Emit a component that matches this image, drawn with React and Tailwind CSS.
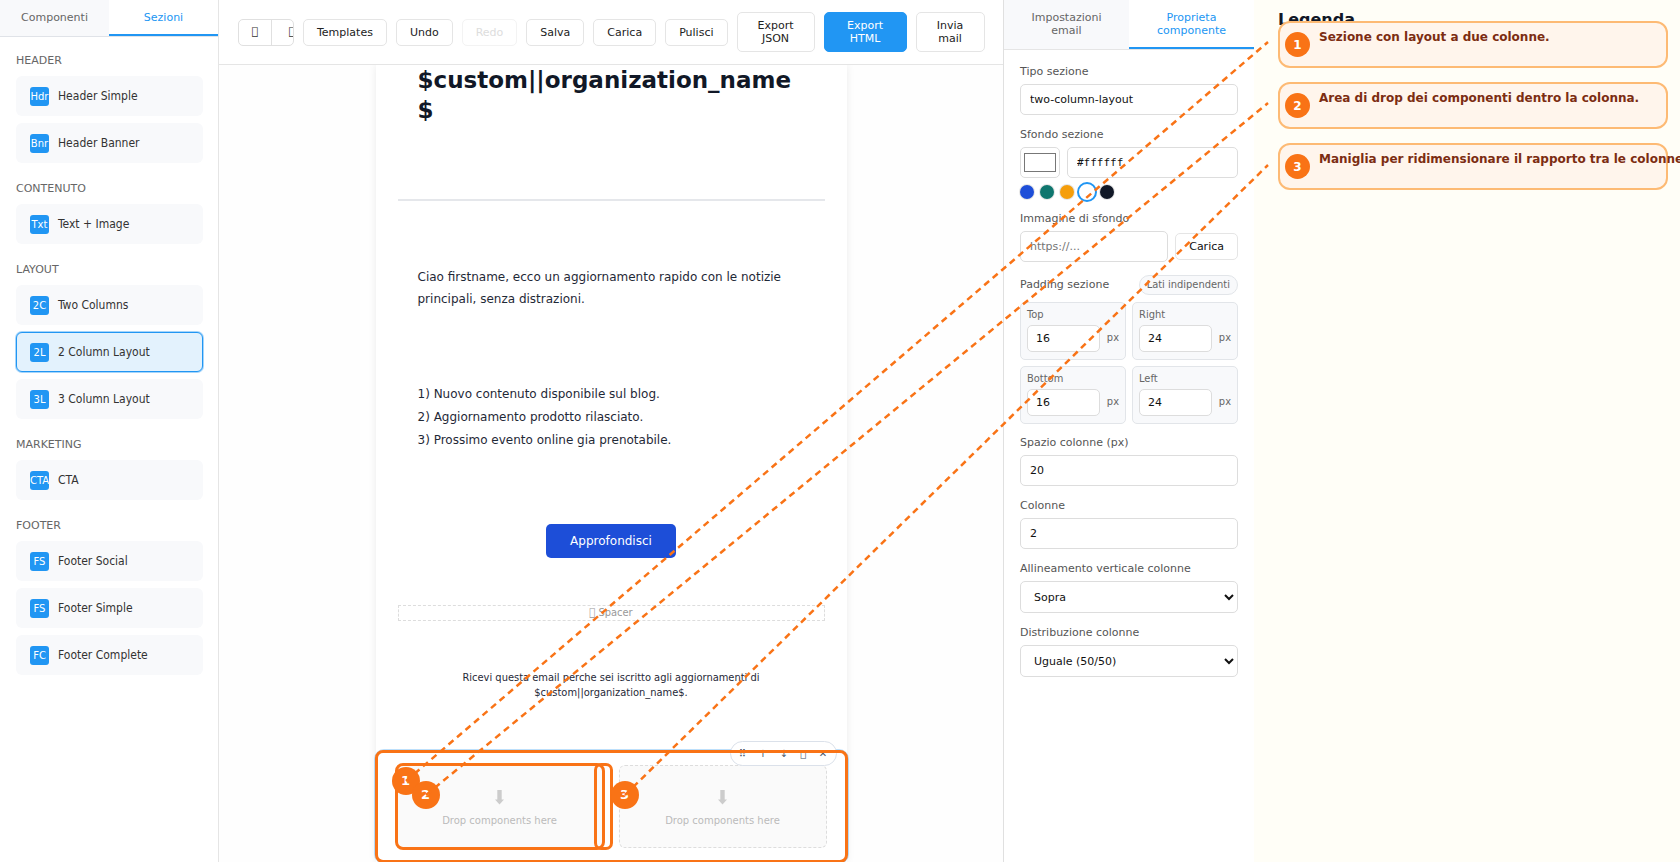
import React from "react";
import clsx from "clsx";

const sectionGroups = [
  {
    title: "HEADER",
    items: [
      { badge: "Hdr", name: "Header Simple" },
      { badge: "Bnr", name: "Header Banner" },
    ],
  },
  { title: "CONTENUTO", items: [{ badge: "Txt", name: "Text + Image" }] },
  {
    title: "LAYOUT",
    items: [
      { badge: "2C", name: "Two Columns" },
      { badge: "2L", name: "2 Column Layout", selected: true },
      { badge: "3L", name: "3 Column Layout" },
    ],
  },
  { title: "MARKETING", items: [{ badge: "CTA", name: "CTA" }] },
  {
    title: "FOOTER",
    items: [
      { badge: "FS", name: "Footer Social" },
      { badge: "FS", name: "Footer Simple" },
      { badge: "FC", name: "Footer Complete" },
    ],
  },
];

const swatches = [
  { name: "Blu", color: "bg-[#1d4ed8]" },
  { name: "Verde", color: "bg-[#0f766e]" },
  { name: "Arancio", color: "bg-[#f59e0b]" },
  { name: "Bianco", color: "bg-white", selected: true },
  { name: "Nero", color: "bg-[#111827]" },
];

const legend = [
  "Sezione con layout a due colonne.",
  "Area di drop dei componenti dentro la colonna.",
  "Maniglia per ridimensionare il rapporto tra le colonne.",
];

const connectors = [
  { x1: 406, y1: 781, x2: 1268, y2: 42 },
  { x1: 426, y1: 795, x2: 1268, y2: 103 },
  { x1: 625, y1: 795, x2: 1268, y2: 165 },
];

// glyph without a face in the UI font, shows as an empty box
const BOX = "\uE0FF";

function Tab({ active, children }) {
  return (
    <button
      className={clsx(
        "flex-1 px-5 text-[11px] leading-[13px] border-b-2",
        active ? "bg-white text-[#2196f3] border-[#2196f3]" : "bg-[#f8f9fb] text-[#666] border-transparent"
      )}
    >
      {children}
    </button>
  );
}

function SectionsSidebar() {
  return (
    <aside className="w-[219px] shrink-0 bg-white border-r border-[#e5e5e5]">
      <div className="flex h-[37px] border-b border-[#e0e3e8]">
        <Tab>Componenti</Tab>
        <Tab active>Sezioni</Tab>
      </div>
      <div className="pl-4 pr-[15px] pt-[17px] flex flex-col gap-[19px]">
        {sectionGroups.map((group) => (
          <div key={group.title}>
            <h3 className="text-[11px] leading-[14px] text-[#666] mb-2">{group.title}</h3>
            <div className="flex flex-col gap-[7px]">
              {group.items.map((item) => (
                <button
                  key={item.name}
                  className={clsx(
                    "h-10 w-full px-[13px] flex items-center gap-[9px] rounded-md border text-left",
                    item.selected ? "bg-[#e3f2fd] border-[#2196f3] ring-1 ring-[#2196f3]/40" : "bg-[#f8f9fb] border-transparent"
                  )}
                >
                  <span className="size-[19px] shrink-0 rounded-[3px] bg-[#2196f3] text-white text-[10px] flex items-center justify-center">
                    {item.badge}
                  </span>
                  <span className="text-[12px] font-['DejaVu_Sans_Condensed','DejaVu_Sans',sans-serif] text-[#333]">{item.name}</span>
                </button>
              ))}
            </div>
          </div>
        ))}
      </div>
    </aside>
  );
}

function ToolbarButton({ className, children, ...props }) {
  return (
    <button
      className={clsx(
        "shrink-0 px-[13px] py-1.5 rounded-[5px] border text-[11px] leading-[13px]",
        className || "bg-white border-[#e5e5e5] text-[#222]"
      )}
      {...props}
    >
      {children}
    </button>
  );
}

function Toolbar() {
  return (
    <header className="h-[65px] shrink-0 px-[19px] flex items-center gap-[9px] bg-white border-b border-[#e5e5e5]">
      <div className="w-14 h-[27px] shrink-0 flex overflow-hidden rounded-[5px] border border-[#e0e0e0] text-[11px] text-[#333]">
        <button aria-label="Desktop" className="w-[33px] shrink-0 border-r border-[#e0e0e0]">{BOX}</button>
        <button aria-label="Mobile" className="w-10 shrink-0">{BOX}</button>
      </div>
      <ToolbarButton>Templates</ToolbarButton>
      <ToolbarButton>Undo</ToolbarButton>
      <ToolbarButton disabled className="bg-white border-[#f3f3f3] text-[#ddd]">
        Redo
      </ToolbarButton>
      <ToolbarButton>Salva</ToolbarButton>
      <ToolbarButton>Carica</ToolbarButton>
      <ToolbarButton>Pulisci</ToolbarButton>
      <ToolbarButton className="w-[78px] bg-white border-[#e5e5e5] text-[#222]">
        Export
        <br />
        JSON
      </ToolbarButton>
      <ToolbarButton className="w-[83px] bg-[#2196f3] border-[#2196f3] text-white">
        Export
        <br />
        HTML
      </ToolbarButton>
      <ToolbarButton className="w-[69px] bg-white border-[#e5e5e5] text-[#222]">
        Invia
        <br />
        mail
      </ToolbarButton>
    </header>
  );
}

function DropColumn({ children }) {
  return (
    <div className="relative flex-1 h-[83px] rounded-md border border-dashed border-[#ddd] bg-[#fafafa] flex flex-col items-center pt-5 text-[#ccc]">
      <svg width="9" height="15" viewBox="0 0 9 15" fill="currentColor" aria-hidden="true" className="mt-1">
        <path d="M2.3 0h4.4v9.5H9L4.5 14.5 0 9.5h2.3z" />
      </svg>
      <span className="mt-[9px] text-[10px] leading-[13px] text-[#bbb]">Drop components here</span>
      {children}
    </div>
  );
}

function Marker({ className, children }) {
  return (
    <span
      className={clsx(
        "absolute size-7 rounded-full bg-[#f97316] text-white text-[13px] font-bold flex items-center justify-center",
        className
      )}
    >
      {children}
    </span>
  );
}

function SelectedSection() {
  return (
    <section className="relative mt-[51px] px-5 py-[14px] bg-white outline-2 outline-[#2196f3]/30 rounded-lg">
      <div className="flex gap-[15px]">
        <DropColumn>
          <div className="absolute -inset-x-[2px] -inset-y-[3px] rounded-lg border-3 border-[#f97316]" />
          {/* resize handle */}
          <div className="absolute -inset-y-[3px] -right-[10px] w-[19px] rounded-[7px] border-3 border-[#f97316]" />
        </DropColumn>
        <DropColumn />
      </div>
      <div className="absolute right-[10px] -top-[10px] w-[107px] h-[25px] px-0.5 rounded-full border border-[#dbe1ea] bg-white flex items-center justify-around text-[10px] text-[#475569]">
        <button aria-label="Sposta">⠿</button>
        <button aria-label="Su">↑</button>
        <button aria-label="Giu">↓</button>
        <button aria-label="Duplica">{BOX}</button>
        <button aria-label="Elimina">✕</button>
      </div>
      <div className="absolute -inset-px rounded-lg border-3 border-[#f97316]" />
      <Marker className="left-4 top-4">1</Marker>
      <Marker className="left-9 top-[30px]">2</Marker>
      <Marker className="left-[235px] top-[30px]">3</Marker>
    </section>
  );
}

function Canvas() {
  return (
    <div className="flex-1 min-h-0 overflow-hidden bg-[#fefefe]">
      <div className="w-[471px] mx-auto bg-white shadow-[0_0_8px_rgba(0,0,0,0.08)]">
        <h1 className="px-[42px] text-[23px] leading-[30px] font-bold text-[#111827]">
          $custom||organization_name
          <br />$
        </h1>
        <hr className="mt-[74px] mx-[22px] border-t-2 border-[#e5e7eb]" />
        <p className="mt-[65px] px-[42px] text-[12px] leading-[22px] text-[#1f2937]">
          Ciao firstname, ecco un aggiornamento rapido con le notizie
          <br />
          principali, senza distrazioni.
        </p>
        <div className="mt-[73px] px-[42px] text-[12px] leading-[23px] text-[#1f2937]">
          <p>1) Nuovo contenuto disponibile sul blog.</p>
          <p>2) Aggiornamento prodotto rilasciato.</p>
          <p>3) Prossimo evento online gia prenotabile.</p>
        </div>
        <div className="mt-[72px] flex justify-center">
          <a href="#" className="w-[130px] h-[34px] rounded-[5px] bg-[#1d4ed8] text-white text-[12px] flex items-center justify-center">
            Approfondisci
          </a>
        </div>
        <div className="mt-[47px] mx-[22px] h-4 border border-dashed border-[#ddd] text-[11px] leading-[14px] font-['DejaVu_Sans_Condensed','DejaVu_Sans',sans-serif] text-[#999] text-center">
          {BOX} Spacer
        </div>
        <p className="mt-[49px] text-[11px] leading-[15px] font-['DejaVu_Sans_Condensed','DejaVu_Sans',sans-serif] text-[#1f2937] text-center">
          Ricevi questa email perche sei iscritto agli aggiornamenti di
          <br />
          $custom||organization_name$.
        </p>
        <SelectedSection />
      </div>
    </div>
  );
}

const inputClass = "w-full h-[31px] px-[9px] rounded-[5px] border border-[#ddd] bg-white text-[11px] text-[#111]";

function Field({ id, label, children }) {
  return (
    <div className="mb-[13px]">
      <label htmlFor={id} className="block mb-[5px] text-[11px] leading-[14px] text-[#555]">
        {label}
      </label>
      {children}
    </div>
  );
}

function PaddingBox({ id, label, value }) {
  return (
    <div className="h-[58px] px-[6px] pt-[5px] rounded-[5px] border border-[#e2e5e9] bg-[#f8f9fb] text-[11px] text-[#666] font-['DejaVu_Sans_Condensed','DejaVu_Sans',sans-serif]">
      <label htmlFor={id} className="block leading-[14px]">
        {label}
      </label>
      <div className="mt-[3px] flex items-center justify-between">
        <input
          id={id}
          defaultValue={value}
          className="w-[73px] h-[27px] px-2 rounded-[5px] border border-[#ddd] bg-white text-[11px] font-['DejaVu_Sans',sans-serif] text-[#111]"
        />
        <span>px</span>
      </div>
    </div>
  );
}

function PropertiesPanel() {
  return (
    <aside className="w-[251px] shrink-0 bg-white border-l border-[#e0e0e0]">
      <div className="flex h-[50px] border-b border-[#e5e5e5]">
        <Tab>Impostazioni email</Tab>
        <Tab active>Proprieta componente</Tab>
      </div>
      <div className="px-4 pt-[15px]">
        <Field id="tipo" label="Tipo sezione">
          <input id="tipo" className={inputClass} defaultValue="two-column-layout" />
        </Field>
        <Field id="sfondo" label="Sfondo sezione">
          <div className="flex gap-[7px]">
            <input
              type="color"
              aria-label="Colore"
              defaultValue="#ffffff"
              className="w-10 h-[31px] shrink-0 p-px rounded-[5px] border border-[#ddd] bg-white"
            />
            <input id="sfondo" className={clsx(inputClass, "font-['DejaVu_Sans_Mono',monospace]")} defaultValue="#ffffff" />
          </div>
          <div className="mt-[7px] flex gap-1.5">
            {swatches.map((s) => (
              <button
                key={s.name}
                aria-label={s.name}
                className={clsx(
                  "size-[14px] rounded-full",
                  s.color,
                  s.selected ? "outline-2 outline-offset-1 outline-[#2196f3]" : "ring-1 ring-black/10"
                )}
              />
            ))}
          </div>
        </Field>
        <Field id="immagine" label="Immagine di sfondo">
          <div className="flex items-center gap-[7px]">
            <input id="immagine" className={clsx(inputClass, "min-w-0 placeholder:text-[#757575]")} placeholder="https://..." />
            <button className="shrink-0 px-[13px] py-1.5 rounded-[5px] border border-[#e5e5e5] text-[11px] leading-[13px] text-[#111]">
              Carica
            </button>
          </div>
        </Field>
        <div className="mb-[7px] flex items-center justify-between text-[11px] text-[#555]">
          <span>Padding sezione</span>
          <button className="h-5 px-[7px] rounded-full border border-[#e2e5e9] bg-[#f8f9fb] text-[11px] font-['DejaVu_Sans_Condensed','DejaVu_Sans',sans-serif] text-[#666]">
            Lati indipendenti
          </button>
        </div>
        <div className="mb-3 grid grid-cols-2 gap-1.5">
          <PaddingBox id="pad-top" label="Top" value="16" />
          <PaddingBox id="pad-right" label="Right" value="24" />
          <PaddingBox id="pad-bottom" label="Bottom" value="16" />
          <PaddingBox id="pad-left" label="Left" value="24" />
        </div>
        <Field id="spazio" label="Spazio colonne (px)">
          <input id="spazio" className={inputClass} defaultValue="20" />
        </Field>
        <Field id="colonne" label="Colonne">
          <input id="colonne" className={inputClass} defaultValue="2" />
        </Field>
        <Field id="allineamento" label="Allineamento verticale colonne">
          <select id="allineamento" className="w-full h-8 pl-[9px] rounded-[5px] border border-[#ddd] bg-white text-[11px] text-[#111]">
            <option>Sopra</option>
          </select>
        </Field>
        <Field id="distribuzione" label="Distribuzione colonne">
          <select id="distribuzione" className="w-full h-8 pl-[9px] rounded-[5px] border border-[#ddd] bg-white text-[11px] text-[#111]">
            <option>Uguale (50/50)</option>
          </select>
        </Field>
      </div>
    </aside>
  );
}

function Legend() {
  return (
    <aside className="w-[426px] shrink-0 pl-6 pr-3 pt-2 overflow-hidden bg-[#fffef7]">
      <h2 className="h-[13px] text-[16px] leading-[24px] font-bold text-[#111827]">Legenda</h2>
      <ol className="relative flex flex-col gap-[14px]">
        {legend.map((text, i) => (
          <li
            key={text}
            className="h-[47px] px-[5px] flex items-center gap-[9px] rounded-xl border-2 border-[#fdba74] bg-[#fff5ec]"
          >
            <span className="size-[25px] shrink-0 rounded-full bg-[#f97316] text-white text-[12px] font-bold flex items-center justify-center">
              {i + 1}
            </span>
            <span className="pb-4 whitespace-nowrap text-[12px] leading-[16px] font-bold text-[#7c2d12]">{text}</span>
          </li>
        ))}
      </ol>
    </aside>
  );
}

export default function App() {
  return (
    <div className="relative h-screen overflow-hidden flex bg-white font-['DejaVu_Sans',sans-serif]">
      <SectionsSidebar />
      <main className="flex-1 min-w-0 flex flex-col">
        <Toolbar />
        <Canvas />
      </main>
      <PropertiesPanel />
      <Legend />
      {/* connectors between the markers and the legend */}
      <svg className="absolute inset-0 size-full pointer-events-none" aria-hidden="true">
        {connectors.map((line) => (
          <line key={line.y2} {...line} stroke="#f97316" strokeWidth="2.5" strokeDasharray="6.5 4.7" />
        ))}
      </svg>
    </div>
  );
}
